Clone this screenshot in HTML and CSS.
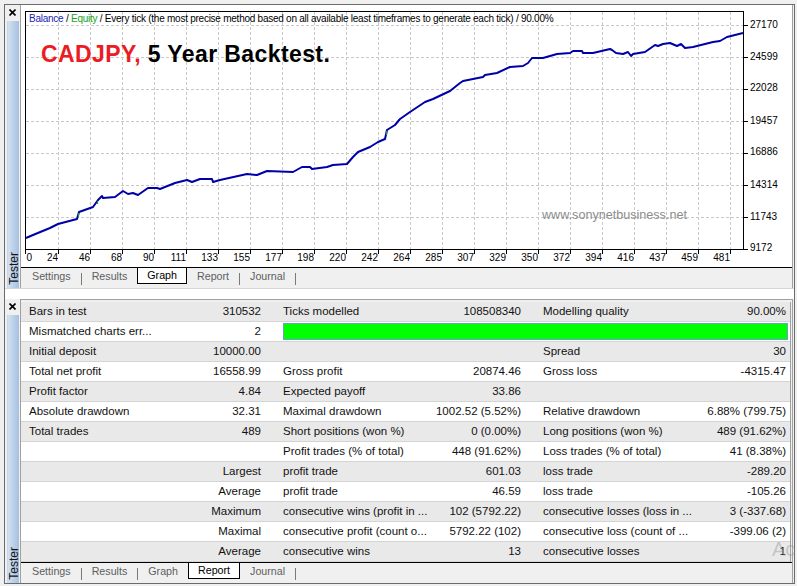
FILE: index.html
```html
<!DOCTYPE html>
<html>
<head>
<meta charset="utf-8">
<link rel="stylesheet" href="styles.css">
</head>
<body>
<div class="window">
  <div class="panel panel-top">
    <div class="side">
      <svg class="close" viewBox="0 0 7 7"><path d="M0.5 0.5L6.5 6.5M6.5 0.5L0.5 6.5" stroke="#000" stroke-width="1.6"/></svg>
      <div class="strip"><span>Tester</span></div>
    </div>
    <div class="content">
      <div class="chart">
        <svg class="plot" width="771" height="262" viewBox="21 5 771 262">
          <g stroke="#c8c8c8" stroke-width="1" stroke-dasharray="3 2" fill="none">
            <path d="M58.5 12V250M90.5 12V250M122.5 12V250M154.5 12V250M186.5 12V250M218.5 12V250M250.5 12V250M282.5 12V250M314.5 12V250M346.5 12V250M378.5 12V250M410.5 12V250M442.5 12V250M474.5 12V250M506.5 12V250M538.5 12V250M570.5 12V250M602.5 12V250M634.5 12V250M666.5 12V250M698.5 12V250M730.5 12V250"/>
            <path d="M26 25.5H744M26 57.5H744M26 89.5H744M26 121.5H744M26 153.5H744M26 185.5H744M26 217.5H744"/>
          </g>
          <rect x="25.5" y="11.5" width="718" height="238" fill="none" stroke="#000" stroke-width="1"/>
          <g stroke="#000" stroke-width="1">
            <path d="M744 25.5H748M744 57.5H748M744 89.5H748M744 121.5H748M744 153.5H748M744 185.5H748M744 217.5H748M744 249.5H748"/>
            <path d="M25.5 250V254M58.5 250V254M90.5 250V254M122.5 250V254M154.5 250V254M186.5 250V254M218.5 250V254M250.5 250V254M282.5 250V254M314.5 250V254M346.5 250V254M378.5 250V254M410.5 250V254M442.5 250V254M474.5 250V254M506.5 250V254M538.5 250V254M570.5 250V254M602.5 250V254M634.5 250V254M666.5 250V254M698.5 250V254M730.5 250V254"/>
          </g>
          <g font-family="Liberation Sans, Arial, sans-serif" font-size="10" fill="#000">
            <text x="750" y="28">27170</text>
            <text x="750" y="60">24599</text>
            <text x="750" y="91">22028</text>
            <text x="750" y="124">19457</text>
            <text x="750" y="155">16886</text>
            <text x="750" y="188">14314</text>
            <text x="750" y="220">11743</text>
            <text x="750" y="251">9172</text>
          </g>
          <g font-family="Liberation Sans, Arial, sans-serif" font-size="10" fill="#000" text-anchor="end">
            <text x="32" y="261">0</text>
            <text x="58" y="261">24</text>
            <text x="90" y="261">46</text>
            <text x="122" y="261">68</text>
            <text x="154" y="261">90</text>
            <text x="186" y="261">111</text>
            <text x="218" y="261">133</text>
            <text x="250" y="261">155</text>
            <text x="282" y="261">177</text>
            <text x="314" y="261">198</text>
            <text x="346" y="261">220</text>
            <text x="378" y="261">242</text>
            <text x="410" y="261">264</text>
            <text x="442" y="261">285</text>
            <text x="474" y="261">307</text>
            <text x="506" y="261">329</text>
            <text x="538" y="261">350</text>
            <text x="570" y="261">372</text>
            <text x="602" y="261">394</text>
            <text x="634" y="261">416</text>
            <text x="666" y="261">437</text>
            <text x="698" y="261">459</text>
            <text x="730" y="261">481</text>
          </g>
          <polyline fill="none" stroke="#0000a8" stroke-width="2" stroke-linejoin="round" points="26,238 33,235 50,228 58,224 77,219 79,212 93,207 98,200 102,196 103,198 115,197 123,191 128,194 133,193 138,195 148,188 157,188 160,189 175,183 187,180 192,182 200,179 212,179 213,182 220,180 247,174 257,175 267,171 293,172 302,167 310,167 312,169 327,167 333,165 347,164 353,157 358,152 370,147 378,142 385,139 387,130 395,125 400,119 410,112 425,102 433,99 450,91 460,83 463,81 483,77 485,75 497,73 510,67 523,66 528,63 532,58 543,58 557,54 570,53 573,51 582,51 583,53 593,53 610,49 612,50 616,53 623,54 628,52 631,56 633,54 645,52 655,45 658,46 663,44 670,43 677,46 681,44 685,48 693,47 713,42 720,41 727,37 743,33"/>
          <g stroke="#1a9a1a" stroke-width="1.2">
            <path d="M78.5 213V217M97.5 201V204M386.5 131V135"/>
          </g>
        </svg>
        <div class="legend"><span class="c-bal">Balance</span> / <span class="c-eq">Equity</span> / Every tick (the most precise method based on all available least timeframes to generate each tick) / 90.00%</div>
        <div class="title"><span class="red">CADJPY,</span> 5 Year Backtest.</div>
        <div class="site">www.sonynetbusiness.net</div>
      </div>
      <div class="tabs">
        <span class="tab">Settings</span><span class="sep"></span>
        <span class="tab">Results</span>
        <span class="tab active">Graph</span>
        <span class="tab">Report</span><span class="sep"></span>
        <span class="tab">Journal</span><span class="sep"></span>
      </div>
    </div>
  </div>
  <div class="gap"></div>
  <div class="panel panel-bottom">
    <div class="side">
      <svg class="close" viewBox="0 0 7 7"><path d="M0.5 0.5L6.5 6.5M6.5 0.5L0.5 6.5" stroke="#000" stroke-width="1.6"/></svg>
      <div class="strip"><span>Tester</span></div>
    </div>
    <div class="content content-report">
      <div class="report">
        <div class="row"><span class="l1">Bars in test</span><span class="v">310532</span><span class="l2">Ticks modelled</span><span class="v">108508340</span><span class="l2">Modelling quality</span><span class="v">90.00%</span></div>
        <div class="row"><span class="l1">Mismatched charts err...</span><span class="v">2</span><span class="bar"></span></div>
        <div class="row"><span class="l1">Initial deposit</span><span class="v">10000.00</span><span class="l2"></span><span class="v"></span><span class="l2">Spread</span><span class="v">30</span></div>
        <div class="row"><span class="l1">Total net profit</span><span class="v">16558.99</span><span class="l2">Gross profit</span><span class="v">20874.46</span><span class="l2">Gross loss</span><span class="v">-4315.47</span></div>
        <div class="row"><span class="l1">Profit factor</span><span class="v">4.84</span><span class="l2">Expected payoff</span><span class="v">33.86</span><span class="l2"></span><span class="v"></span></div>
        <div class="row"><span class="l1">Absolute drawdown</span><span class="v">32.31</span><span class="l2">Maximal drawdown</span><span class="v">1002.52 (5.52%)</span><span class="l2">Relative drawdown</span><span class="v">6.88% (799.75)</span></div>
        <div class="row"><span class="l1">Total trades</span><span class="v">489</span><span class="l2">Short positions (won %)</span><span class="v">0 (0.00%)</span><span class="l2">Long positions (won %)</span><span class="v">489 (91.62%)</span></div>
        <div class="row"><span class="l1"></span><span class="v"></span><span class="l2">Profit trades (% of total)</span><span class="v">448 (91.62%)</span><span class="l2">Loss trades (% of total)</span><span class="v">41 (8.38%)</span></div>
        <div class="row"><span class="l1"></span><span class="v">Largest</span><span class="l2">profit trade</span><span class="v">601.03</span><span class="l2">loss trade</span><span class="v">-289.20</span></div>
        <div class="row"><span class="l1"></span><span class="v">Average</span><span class="l2">profit trade</span><span class="v">46.59</span><span class="l2">loss trade</span><span class="v">-105.26</span></div>
        <div class="row"><span class="l1"></span><span class="v">Maximum</span><span class="l2">consecutive wins (profit in ...</span><span class="v">102 (5792.22)</span><span class="l2">consecutive losses (loss in ...</span><span class="v">3 (-337.68)</span></div>
        <div class="row"><span class="l1"></span><span class="v">Maximal</span><span class="l2">consecutive profit (count o...</span><span class="v">5792.22 (102)</span><span class="l2">consecutive loss (count of ...</span><span class="v">-399.06 (2)</span></div>
        <div class="row"><span class="l1"></span><span class="v">Average</span><span class="l2">consecutive wins</span><span class="v">13</span><span class="l2">consecutive losses</span><span class="v">1</span></div>
      </div>
      <div class="tabs">
        <span class="tab">Settings</span><span class="sep"></span>
        <span class="tab">Results</span><span class="sep"></span>
        <span class="tab">Graph</span>
        <span class="tab active">Report</span>
        <span class="tab">Journal</span><span class="sep"></span>
      </div>
    </div>
  </div>
</div>
<div class="activate">Ac</div>
</body>
</html>
```

FILE: styles.css
```css
* { box-sizing: border-box; }

body {
  margin: 0;
  width: 797px;
  height: 586px;
  overflow: hidden;
  position: relative;
  background: #f0f0f0;
  font-family: "Liberation Sans", Arial, sans-serif;
  color: #000;
}

.window {
  margin: 4px 0 0 4px;
  width: 791px;
  height: 580px;
  border: 1px solid #6b6b6b;
  background: #fff;
  display: flex;
  flex-direction: column;
}

.panel {
  display: flex;
  height: 284px;
  background: #f0f0f0;
  flex: none;
}

.panel-top { border-bottom: 1px solid #d6d6d6; }

.gap { height: 10px; background: #fff; flex: none; }

.side {
  width: 15px;
  display: flex;
  flex-direction: column;
  align-items: flex-start;
}

.close {
  margin: 4px 0 0 4px;
  width: 7px;
  height: 7px;
  flex: none;
}

.strip {
  margin: 5px 0 0 2px;
  width: 12px;
  flex: 1;
  background: linear-gradient(to right, #d2e1f2, #a6c0de);
  border-left: 1px solid #c5d6ea;
  display: flex;
  flex-direction: column;
  justify-content: flex-end;
  align-items: center;
  padding-bottom: 3px;
}

.strip span {
  writing-mode: vertical-rl;
  transform: rotate(180deg);
  font-size: 12px;
  line-height: 12px;
  color: #141414;
}

.content {
  flex: 1;
  margin-right: 1px;
  border-left: 1px solid #a0a0a0;
  border-right: 1px solid #a0a0a0;
  display: flex;
  flex-direction: column;
}

.content-report {
  border-top: 1px solid #a0a0a0;
  padding-top: 2px;
}

.chart {
  position: relative;
  height: 262px;
  background: #fff;
  flex: none;
}

.plot { display: block; }

.legend {
  position: absolute;
  left: 8px;
  top: 8px;
  font-size: 10px;
  line-height: 12px;
  letter-spacing: -0.25px;
  white-space: nowrap;
  color: #000;
}

.c-bal { color: #1c1cb4; }
.c-eq { color: #19a319; }

.title {
  position: absolute;
  left: 20px;
  top: 36px;
  font-size: 23px;
  line-height: 26px;
  letter-spacing: 0.4px;
  font-weight: bold;
  white-space: nowrap;
  color: #000;
}

.red { color: #ec1c24; }

.site {
  position: absolute;
  left: 521px;
  top: 202px;
  font-size: 12.6px;
  line-height: 16px;
  color: #8c8c8c;
  white-space: nowrap;
}

.tabs {
  height: 21px;
  border-top: 1px solid #000;
  background: #f0f0f0;
  display: flex;
  align-items: flex-start;
  padding-left: 1px;
  flex: none;
}

.tab {
  padding: 0 10px;
  height: 16px;
  line-height: 16px;
  font-size: 10.7px;
  color: #5e5e5e;
  white-space: nowrap;
}

.tab.active {
  background: #fff;
  color: #000;
  border: 1px solid #000;
  border-top: none;
  line-height: 15px;
  padding: 0 9px;
}

.sep {
  width: 1px;
  height: 12px;
  margin-top: 5px;
  background: #7a7a7a;
}

.report {
  height: 260px;
  margin-right: 1px;
  border-right: 1px solid #a0a0a0;
  flex: none;
}

.row {
  display: grid;
  grid-template-columns: 149px 95px 170px 90px 180px 1fr;
  height: 20px;
  border-bottom: 1px solid #d4d4d4;
  font-size: 11.5px;
  line-height: 19px;
  color: #111;
  background: #fff;
}

.row:nth-child(odd) { background: #e9e9e9; }

.row span {
  white-space: nowrap;
  overflow: hidden;
}

.l1 { padding-left: 8px; }
.l2 { padding-left: 18px; }
.v { text-align: right; padding-right: 4px; }

.bar {
  grid-column: 3 / 7;
  margin: 1px 2px 1px 18px;
  height: 17px;
  background: #00ff00;
  border: 1px solid #6a9fd6;
}

.activate {
  position: absolute;
  left: 772px;
  top: 537px;
  font-size: 20px;
  line-height: 24px;
  color: rgba(150, 150, 150, 0.45);
  white-space: nowrap;
}
```
